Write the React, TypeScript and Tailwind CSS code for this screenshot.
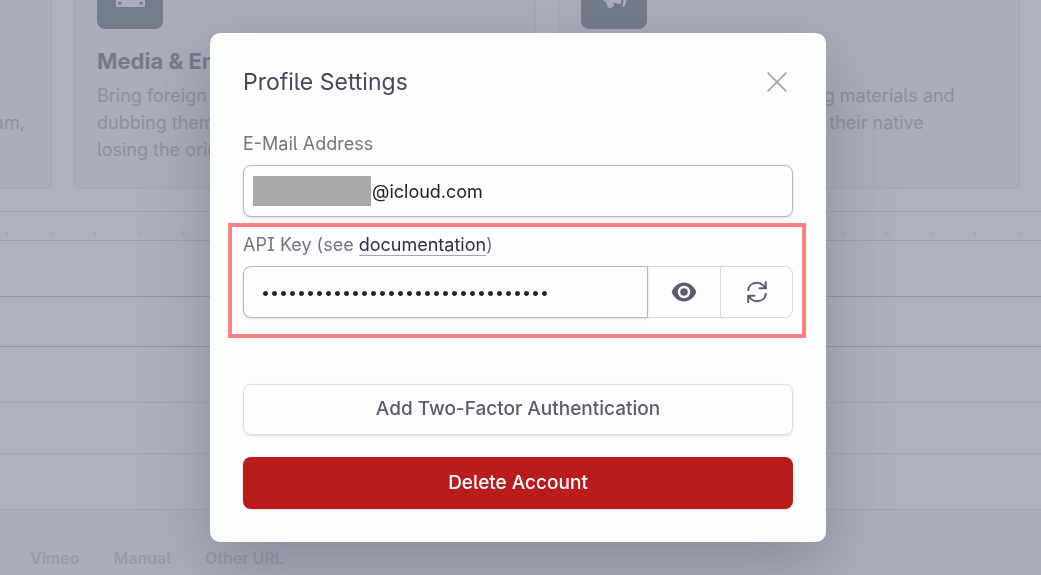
import React from 'react'

const Marks = () => (
  <svg className="block w-full h-7" aria-hidden="true">
    <defs>
      <pattern id="marks" width="44" height="28" patternUnits="userSpaceOnUse">
        <path d="M4.500 21.500h6M7.500 18.500v6" stroke="#a3a5b3" strokeWidth="1" />
      </pattern>
    </defs>
    <rect width="100%" height="28" fill="url(#marks)" />
  </svg>
)

const FilmIcon = () => (
  <svg viewBox="0 0 29 22" className="w-[29px] h-[22px]" fill="#abadb9" aria-hidden="true">
    <path fillRule="evenodd" d="M1.500 0h26A1.500 1.500 0 0 1 29 1.500v19a1.500 1.500 0 0 1-1.500 1.500h-26A1.500 1.500 0 0 1 0 20.500v-19A1.500 1.500 0 0 1 1.500 0zM2.300 16.800v3h3v-3zM23.700 16.800v3h3v-3z" />
  </svg>
)

const MegaphoneIcon = () => (
  <svg viewBox="0 0 32 32" className="w-8 h-8" fill="#abadb9" aria-hidden="true">
    <path d="M5 14l10-3 8-9 1 14-1.500 8.500L15 22.500l1 2.500q-.500 2.500-3.500 3-2 .300-3-1.500L8 22l-3-1.500z" />
    <path d="M28 4l2 .500-2 17.500-1.500 4.500-2.200.500z" />
  </svg>
)

interface CardProps {
  title?: string
  lines: string[]
  icon?: React.ReactNode
}

const Card = ({ title, lines, icon }: CardProps) => (
  <article className="w-[462px] h-[249px] shrink-0 rounded-lg border border-[#a4a6b4] bg-[#abadb9] px-[22px] pt-[22px]">
    <div className="flex size-[66px] items-center justify-center rounded-lg bg-[#767b8b]">{icon}</div>
    <h2 className="mt-4 h-[33px] text-[22px] leading-[33px] font-bold text-[#767b8b]">{title}</h2>
    <p className="mt-1 text-lg leading-[27px] text-[#8e909f]">
      {lines.map((line) => (
        <span key={line} className="block whitespace-nowrap">{line}</span>
      ))}
    </p>
  </article>
)

const Landing = () => (
  <div aria-hidden="true" className="h-full overflow-hidden bg-[#aeb0bc]">
    {/* Use cases */}
    <section className="-mt-[60px] flex -ml-[410px] border-b border-[#a0a2b0] pb-[22px]">
      <div className="flex gap-[22px]">
        <Card lines={['Publish videos in every language and', 'talk to customers, viewers and your whole team,']} />
        <Card
          title="Media & Entertainment"
          lines={['Bring foreign films to new audiences by', 'dubbing them in any language without', 'losing the original voices.']}
          icon={<FilmIcon />}
        />
        <Card
          title="Education"
          lines={['Localize your existing training materials and', 'let every student progress in their native', 'language.']}
          icon={<MegaphoneIcon />}
        />
      </div>
    </section>
    <Marks />
    {/* Table rows */}
    <div className="h-14 border-t border-[#9b9db0]" />
    <div className="h-[50px] border-t border-[#9294a8]" />
    <div className="h-14 border-t border-[#9294a8]" />
    <div className="h-[51px] border-t border-[#a2a5b3]" />
    <div className="h-14 border-t border-[#a2a5b3]" />
    <div className="h-[23px] border-t border-[#a3a5b2] bg-[#abadb9]" />
    <div className="flex h-20 gap-[34px] border-t border-[#a6a8b6] bg-[#abadb9] px-[30px] pt-[13px] text-base font-semibold text-[#999ba9]">
      <span>Vimeo</span>
      <span>Manual</span>
      <span>Other URL</span>
    </div>
  </div>
)

const ProfileSettings = () => (
  <div
    role="dialog"
    aria-labelledby="dialog-title"
    className="w-full max-w-[616px] rounded-[10px] bg-[#fcfdfd] p-[33px] shadow-[0_22px_66px_rgba(70,75,100,0.35)]"
  >
    <header className="flex h-[31px] items-center justify-between">
      <h1 id="dialog-title" className="text-[23px] leading-8 text-[#4a475f]">Profile Settings</h1>
      <button type="button" aria-label="Close" className="flex size-[33px] items-center justify-center">
        <svg viewBox="0 0 20 20" className="size-5" fill="none" stroke="#a5a5b8" strokeWidth="1.800" strokeLinecap="round">
          <path d="M1.200 1.200l17.600 17.600M18.800 1.200l-17.600 17.600" />
        </svg>
      </button>
    </header>

    <div className="mt-[35px]">
      <label htmlFor="email" className="block text-lg leading-6 text-[#747287]">E-Mail Address</label>
      <div className="relative mt-[9px]">
        <input
          id="email"
          type="text"
          defaultValue="@icloud.com"
          className="block h-[52px] w-full rounded-lg border border-[#b5b5c5] bg-[#fcfdfd] pl-32 pr-4 text-lg text-[#20232f] shadow-sm outline-none [font-feature-settings:normal]"
        />
        <span className="absolute left-[10px] top-[11px] h-[30px] w-[118px] bg-[#a9a9a9]" />
      </div>
    </div>

    <div className="relative mt-4">
      <label htmlFor="api-key" className="block text-lg leading-6 text-[#747287]">
        API Key (see <a href="#docs" className="border-b border-[#a5a5b8] text-[#302c47]">documentation</a>)
      </label>
      <div className="mt-[9px] flex h-[52px]">
        <input
          id="api-key"
          type="password"
          defaultValue="0123456789abcdef0123456789abcdef"
          className="w-full min-w-0 flex-1 rounded-l-lg border border-[#b5b5c5] bg-[#fcfdfd] px-[17px] text-base text-[#20232f] shadow-sm outline-none"
        />
        <button type="button" aria-label="Show API key" className="flex w-[73px] items-center justify-center border-y border-r border-[#d9d9e5]">
          <svg viewBox="0 0 26 20" className="h-5 w-[26px]" fill="#5e5a72">
            <path fillRule="evenodd" d="M13 .500C7.500.500 2.700 4.500.700 10 2.700 15.500 7.500 19.500 13 19.500s10.300-4 12.300-9.500C23.300 4.500 18.500.500 13 .500zm0 15.700a6.200 6.200 0 1 1 0-12.400 6.200 6.200 0 0 1 0 12.400z" />
            <circle cx="13" cy="10" r="3.800" />
          </svg>
        </button>
        <button type="button" aria-label="Renew API key" className="flex w-[72px] items-center justify-center rounded-r-lg border-y border-r border-[#d9d9e5]">
          <svg viewBox="0 0 20 22" className="h-[22px] w-5" fill="none" stroke="#5e5a72" strokeWidth="2" strokeLinecap="round">
            <path d="M1.200 9C1.800 4.500 5.500 1.800 10 1.800c3.200 0 6 1.600 8.300 5M18.800 1v6.300h-6.300M18.800 13C18.200 17.500 14.500 20.200 10 20.200c-3.200 0-6-1.600-8.300-5M1.200 21v-6.300h6.300" />
          </svg>
        </button>
      </div>
      <div className="pointer-events-none absolute -left-[15px] -right-[13px] -top-[10px] -bottom-5 border-4 border-[#ff8080]" />
    </div>

    <button type="button" className="mt-[66px] block h-[51px] w-full rounded-lg border border-[#dcdce8] text-[19px] font-medium text-[#5e5a72] shadow-sm">
      Add Two-Factor Authentication
    </button>
    <button type="button" className="mt-[22px] block h-[52px] w-full rounded-lg bg-[#b91c1c] text-[19px] font-medium text-white shadow-sm">
      Delete Account
    </button>
  </div>
)

const App = () => {
  return (
    <main className="h-screen overflow-hidden font-['Inter',sans-serif] [font-feature-settings:'ss02']">
      <Landing />
      <div className="fixed inset-0 flex items-center justify-center pr-[5px]">
        <ProfileSettings />
      </div>
    </main>
  )
}

export default App
